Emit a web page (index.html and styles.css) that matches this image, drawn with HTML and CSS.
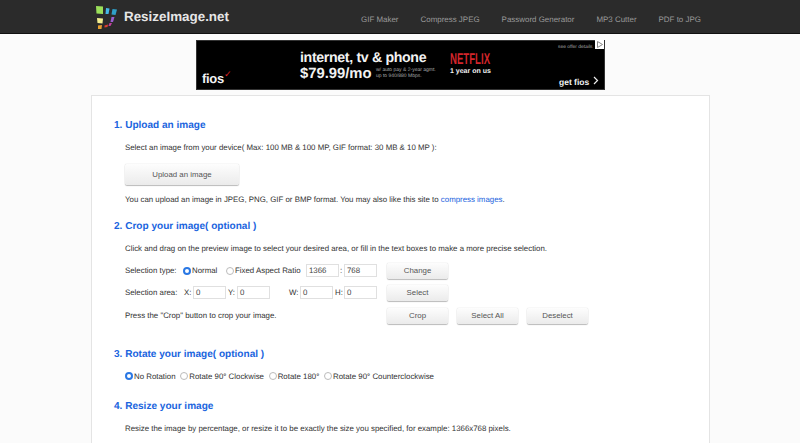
FILE: index.html
```html
<!DOCTYPE html>
<html lang="en">
<head>
<meta charset="utf-8">
<title>ResizeImage.net</title>
<link rel="stylesheet" href="styles.css">
</head>
<body>
<header class="topbar">
  <div class="brand">
    <svg class="logo" width="23" height="25" viewBox="0 0 23 25">
      <polygon points="1,1 8,1.5 8,9 1.5,8.5" fill="#9be05a"/>
      <polygon points="11,3 14.5,3.5 13.5,9 10.5,9" fill="#45b8e8"/>
      <polygon points="17.5,4 22,4.5 20.5,10 16.5,9.5" fill="#2fa0c8"/>
      <polygon points="2,13 8,13.5 7.5,18.5 2.5,18" fill="#f2ee90"/>
      <polygon points="3,20.5 7,20 6.5,24 3,24" fill="#e8a030"/>
      <polygon points="16.5,12 19.5,12 18,17 15.5,17" fill="#9a5fd0"/>
      <polygon points="14.5,18 17,18 15.5,21 13.5,21" fill="#c040a0"/>
      <polygon points="9.5,20.5 13,19.5 12.5,22 9.5,22.5" fill="#e04030"/>
    </svg>
    <span class="brand-name">ResizeImage.net</span>
  </div>
  <nav class="nav">
    <a>GIF Maker</a>
    <a>Compress JPEG</a>
    <a>Password Generator</a>
    <a>MP3 Cutter</a>
    <a>PDF to JPG</a>
  </nav>
</header>

<div class="ad-row">
  <div class="ad">
    <span class="fios">fios<i class="check">✓</i></span>
    <div class="offer">
      <span class="offer-a">internet, tv &amp; phone</span>
      <span class="offer-b">$79.99/mo</span>
      <span class="offer-fine">w/ auto pay &amp; 2-year agmt.<br>up to 940/880 Mbps.</span>
    </div>
    <div class="netflix">
      <span class="netflix-logo">NETFLIX</span>
      <span class="netflix-sub">1 year on us</span>
    </div>
    <span class="details">see offer details</span>
    <span class="adchoice">
      <svg width="9" height="9" viewBox="0 0 9 9"><path d="M2.5 1.5v6l5-3z" fill="none" stroke="#888" stroke-width="1"/></svg>
    </span>
    <span class="getfios">get fios <svg class="chev" width="6" height="9" viewBox="0 0 6 9"><path d="M1 1l3.5 3.5L1 8" fill="none" stroke="#eee" stroke-width="1.2"/></svg></span>
  </div>
</div>

<main class="card">
  <h2 class="step step-1">1. Upload an image</h2>
  <p class="line line-select">Select an image from your device( Max: 100 MB &amp; 100 MP, GIF format: 30 MB &amp; 10 MP ):</p>
  <button class="btn btn-upload">Upload an image</button>
  <p class="line line-note">You can upload an image in JPEG, PNG, GIF or BMP format. You may also like this site to <a class="link">compress images</a>.</p>

  <h2 class="step step-2">2. Crop your image( optional )</h2>
  <p class="line line-crop">Click and drag on the preview image to select your desired area, or fill in the text boxes to make a more precise selection.</p>

  <div class="crop-row row-type">
    <span class="row-label label-type">Selection type:</span>
    <span class="radio on"></span><span class="radio-text t-normal">Normal</span>
    <span class="radio"></span><span class="radio-text t-fixed">Fixed Aspect Ratio</span>
    <span class="field">1366</span><span class="sep sep-colon">:</span><span class="field">768</span>
    <button class="btn btn-sm btn-end">Change</button>
  </div>
  <div class="crop-row row-area">
    <span class="row-label label-area">Selection area:</span>
    <span class="sep sep-x">X:</span><span class="field">0</span>
    <span class="sep sep-y">Y:</span><span class="field">0</span>
    <span class="sep sep-w">W:</span><span class="field">0</span>
    <span class="sep sep-h">H:</span><span class="field">0</span>
    <button class="btn btn-sm btn-end">Select</button>
  </div>
  <div class="crop-row row-press">
    <span class="row-label label-press">Press the "Crop" button to crop your image.</span>
    <button class="btn btn-sm">Crop</button>
    <button class="btn btn-sm">Select All</button>
    <button class="btn btn-sm">Deselect</button>
  </div>

  <h2 class="step step-3">3. Rotate your image( optional )</h2>
  <div class="rotate-row">
    <span class="radio on"></span><span class="radio-text r-item">No Rotation</span>
    <span class="radio"></span><span class="radio-text r-item">Rotate 90° Clockwise</span>
    <span class="radio"></span><span class="radio-text r-item">Rotate 180°</span>
    <span class="radio"></span><span class="radio-text r-item">Rotate 90° Counterclockwise</span>
  </div>

  <h2 class="step step-4">4. Resize your image</h2>
  <p class="line line-resize">Resize the image by percentage, or resize it to be exactly the size you specified, for example: 1366x768 pixels.</p>
</main>
</body>
</html>
```

FILE: styles.css
```css
* { box-sizing: border-box; }
html, body { margin: 0; padding: 0; height: 443px; overflow: hidden; }
body {
  background: #fbfbfb;
  font-family: "Liberation Sans", Arial, sans-serif;
  font-size: 7.87px;
  color: #333;
  text-rendering: geometricPrecision;
}

.topbar {
  height: 34px;
  background: #2b2b2b;
  border-bottom: 1px solid #111;
  display: flex;
  align-items: flex-start;
  padding-left: 95px;
}
.brand { display: flex; align-items: flex-start; width: 266px; flex: none; }
.logo { margin-top: 5px; flex: none; }
.brand-name {
  margin-left: 6px;
  margin-top: 9px;
  font-size: 13.4px;
  line-height: 16px;
  font-weight: bold;
  color: #e6e6e6;
}
.nav { display: flex; gap: 22px; padding-top: 14px; }
.nav a { font-size: 7.95px; line-height: 12px; color: #9a9a9a; white-space: nowrap; }

.ad-row { display: flex; padding: 6px 0 0 196px; }
.ad {
  position: relative;
  width: 409px;
  height: 50px;
  background: #000;
  border: 1px solid #333;
  color: #f2f2f2;
}
.fios { position: absolute; left: 5px; top: 30px; font-size: 13px; line-height: 16px; font-weight: bold; letter-spacing: -0.3px; }
.check { position: absolute; left: 22px; top: -5px; color: #d22; font-size: 9px; font-style: normal; font-weight: normal; }
.offer { position: absolute; left: 103px; top: 9px; width: 200px; height: 34px; }
.offer-a { position: absolute; left: 0; top: 0; font-size: 14.2px; line-height: 16px; font-weight: bold; letter-spacing: -0.35px; white-space: nowrap; }
.offer-b { position: absolute; left: 0; top: 15px; font-size: 14.8px; line-height: 18px; font-weight: bold; white-space: nowrap; }
.offer-fine { position: absolute; left: 76px; top: 17px; font-size: 5px; line-height: 6px; color: #aaa; white-space: nowrap; }
.netflix { position: absolute; left: 253px; top: 11px; }
.netflix-logo { display: block; font-size: 15.5px; line-height: 16px; font-weight: bold; color: #d3252b; white-space: nowrap; transform: scaleX(0.62); transform-origin: left; }
.netflix-sub { display: block; margin-top: -1px; font-size: 7px; line-height: 9px; font-weight: bold; white-space: nowrap; }
.details { position: absolute; left: 361px; top: 3px; font-size: 4.9px; line-height: 8px; color: #aaa; white-space: nowrap; }
.adchoice { position: absolute; right: 0; top: -1px; width: 9px; height: 9px; background: #fff; display: flex; }
.getfios { position: absolute; left: 362px; top: 35px; font-size: 8.5px; line-height: 10px; font-weight: bold; white-space: nowrap; }
.chev { margin-left: 1px; }

.card {
  width: 619px;
  height: 360px;
  margin: 5px 0 0 91px;
  background: #fff;
  border: 1px solid #e4e4e4;
  border-bottom: 0;
  padding: 0 22px;
}
.step {
  margin: 0;
  font-size: 10.05px;
  line-height: 14px;
  font-weight: bold;
  color: #1a64de;
  white-space: nowrap;
}
.step-1 { margin-top: 23px; }
.step-2 { margin-top: 14px; }
.step-3 { margin-top: 24px; }
.step-4 { margin-top: 18px; }
.line {
  margin: 0;
  padding-left: 11px;
  font-size: 7.87px;
  line-height: 12px;
  color: #333;
  white-space: nowrap;
}
.line-select { margin-top: 9px; }
.line-note { margin-top: 9px; }
.line-crop { margin-top: 9px; }
.line-resize { margin-top: 9px; }
.link { color: #1a64de; }

.btn {
  display: block;
  font-family: inherit;
  font-size: 7.87px;
  color: #555;
  border: 0;
  border-radius: 2px;
  background: linear-gradient(#fdfdfd, #ebebeb);
  box-shadow: 0 0 1px rgba(0,0,0,.3), 0 1px 1px rgba(0,0,0,.25);
  padding: 0;
}
.btn-upload { margin: 10px 0 0 11px; width: 114px; height: 21px; }
.btn-sm { width: 61px; height: 16px; flex: none; }
.btn-end { margin-left: 10px; }

.crop-row { display: flex; align-items: center; padding-left: 11px; height: 17px; white-space: nowrap; }
.row-type { margin-top: 7px; }
.row-area { margin-top: 5px; }
.row-press { margin-top: 6px; }
.row-label { flex: none; }
.label-type { width: 58px; }
.label-area { width: 59px; }
.label-press { width: 262px; }
.row-press .btn-sm { margin-right: 9px; }
.radio {
  flex: none;
  width: 8px;
  height: 8px;
  border-radius: 50%;
  border: 1px solid #bbb;
  background: #fff;
}
.radio.on { border: 2.5px solid #2a78e4; }
.radio-text { flex: none; margin-left: 1px; color: #333; }
.t-normal { width: 34px; }
.t-fixed { width: 71px; }
.field {
  flex: none;
  width: 33px;
  height: 13px;
  line-height: 12px;
  border: 1px solid #e0e0e0;
  background: #fff;
  padding-left: 2px;
  color: #444;
}
.sep { flex: none; }
.sep-colon { width: 5px; padding-left: 1px; }
.sep-x { width: 9px; }
.sep-y { width: 9px; margin-left: 2px; }
.sep-w { width: 11px; margin-left: 19px; }
.sep-h { width: 9px; margin-left: 2px; }

.rotate-row { display: flex; align-items: center; padding-left: 11px; height: 12px; margin-top: 8px; white-space: nowrap; }
.r-item { margin-right: 4.7px; }
```
